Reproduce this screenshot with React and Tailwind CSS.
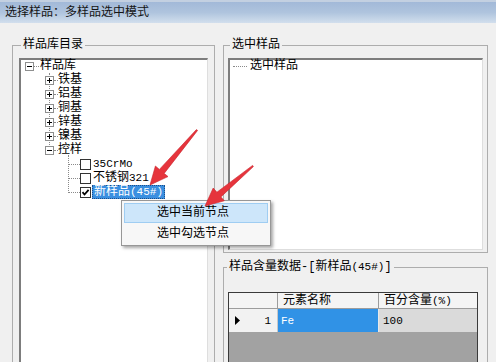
import React from "react";

const font = "font-['Liberation_Mono','Noto_Sans_CJK_SC',monospace]";

const groups = ["铁基", "铝基", "铜基", "锌基", "镍基"];

export default function App() {
  return (
    <div
      className={`relative flex h-[362px] w-[496px] flex-col overflow-hidden bg-[#f0f0f0] text-[12px] leading-[14px] text-black ${font}`}
    >
      {/* TITLE BAR */}
      <div className="flex h-[23px] shrink-0 items-center border-t-2 border-[#c3d0e1] bg-linear-to-b from-[#a2b9d8] via-[#afc4de] to-[#d2dfed] pl-[5px] text-[12px] text-[#141414]">
        选择样品：多样品选中模式
      </div>

      {/* BODY */}
      <div className="flex pl-[12px] pt-[15px]">
        {/* LEFT GROUP */}
        <fieldset className="h-[340px] w-[203px] shrink-0 border border-[#adadad]">
          <legend className="ml-[8px] px-[2px] leading-[14px]">样品库目录</legend>

          <div className="mx-[6px] mt-[6px] h-[320px] border-l-2 border-t-2 border-b border-r border-l-[#7d7d7d] border-t-[#7d7d7d] border-b-[#dedede] border-r-[#dedede] bg-white">
            <div className="relative -mt-px">
              <span className="absolute left-[28px] top-[14px] h-[74px] border-l border-dotted border-[#8a8a8a]" />
              <span className="absolute left-[47px] top-[96px] h-[36px] border-l border-dotted border-[#8a8a8a]" />

              <TreeRow indent="pl-[4px]">
                <ToggleBox open />
                <Dots w="w-[5px]" />
                <span className="ml-px">样品库</span>
              </TreeRow>

              {groups.map((name) => (
                <TreeRow key={name} indent="pl-[24px]">
                  <ToggleBox />
                  <Dots w="w-[4px]" />
                  <span>{name}</span>
                </TreeRow>
              ))}

              <TreeRow indent="pl-[24px]">
                <ToggleBox open />
                <Dots w="w-[4px]" />
                <span>控样</span>
              </TreeRow>

              <TreeRow indent="pl-[47px]">
                <Dots w="w-[12px]" />
                <CheckBox />
                <span className="ml-[2px] text-[11px]">35CrMo</span>
              </TreeRow>

              <TreeRow indent="pl-[47px]">
                <Dots w="w-[12px]" />
                <CheckBox />
                <span className="ml-[2px]">
                  不锈钢<span className="text-[11px]">321</span>
                </span>
              </TreeRow>

              <TreeRow indent="pl-[47px]">
                <Dots w="w-[12px]" />
                <CheckBox checked />
                <span className="ml-px border border-dotted border-[#1d4f8a] bg-[#3a8fe0] px-px leading-[12px] text-white">
                  新样品<span className="text-[11px]">(45#)</span>
                </span>
              </TreeRow>
            </div>
          </div>
        </fieldset>

        {/* RIGHT COLUMN */}
        <div className="ml-[8px] flex w-[265px] shrink-0 flex-col">
          <fieldset className="h-[215px] border border-[#adadad] pb-[2px]">
            <legend className="ml-[6px] px-[2px] leading-[14px]">选中样品</legend>
            <div className="mx-[4px] mt-[6px] h-[192px] border-l-2 border-t-2 border-b border-r border-l-[#7d7d7d] border-t-[#7d7d7d] border-b-[#dedede] border-r-[#dedede] bg-white">
              <div className="-mt-px flex h-[14px] items-center pl-[3px]">
                <Dots w="w-[14px]" />
                <span className="ml-[3px]">选中样品</span>
              </div>
            </div>
          </fieldset>

          <fieldset className="mt-[7px] h-[120px] border border-[#adadad]">
            <legend className="ml-[3px] px-[2px] leading-[14px]">
              样品含量数据-[新样品<span className="text-[11px]">(45#)</span>]
            </legend>

            <div className="ml-[4px] mt-[18px] flex h-[90px] w-[250px] flex-col border border-[#3a3a3a] bg-[#a2a2a2]">
              <div className="flex h-[16px] shrink-0 border-b border-[#9c9c9c] bg-[#f4f4f4]">
                <div className="w-[49px] border-r border-[#9c9c9c]" />
                <div className="w-[101px] border-r border-[#9c9c9c] pl-[5px] leading-[16px]">元素名称</div>
                <div className="flex-1 pl-[5px] leading-[16px]">
                  百分含量<span className="text-[11px]">(%)</span>
                </div>
              </div>
              <div className="flex h-[23px] shrink-0">
                <div className="flex w-[49px] items-center justify-between border-r border-[#c8c8c8] bg-[#f2f2f2] pl-[6px] pr-[6px]">
                  <svg width="5" height="9" viewBox="0 0 5 9">
                    <path d="M0 0L5 4.5L0 9Z" fill="#000" />
                  </svg>
                  <span className="text-[11px]">1</span>
                </div>
                <div className="flex w-[101px] items-center border-r border-[#e8e8e8] bg-[#3092e6] pl-[3px] text-[11px] text-white">
                  Fe
                </div>
                <div className="flex flex-1 items-center bg-[#dadada] pl-[4px] text-[11px]">100</div>
              </div>
            </div>
          </fieldset>
        </div>
      </div>

      {/* CONTEXT MENU */}
      <div className="absolute left-[121px] top-[200px] w-[150px] border border-[#979797] bg-[#f7f7f7] p-[2px] pb-0 shadow-[2px_2px_3px_rgba(0,0,0,0.35)]">
        <div className="flex h-[20px] items-center border border-[#9fcdf2] bg-[#cde6fa] pl-[32px]">
          选中当前节点
        </div>
        <div className="flex h-[22px] items-center pl-[33px]">选中勾选节点</div>
      </div>

      {/* RED ARROWS */}
      <svg
        className="pointer-events-none absolute left-0 top-0"
        width="496"
        height="362"
        viewBox="0 0 496 362"
      >
        <polygon
          points="196.4,129.6 159.4,169.4 155.4,166 150,185 168,176.6 164.2,173.4 197.6,130.4"
          fill="#e6343c"
          stroke="#c9242c"
          strokeWidth="0.6"
        />
        <polygon
          points="252.6,165.4 216.9,192.2 213.2,188 205,206 224.3,200.8 220.9,196.9 253.4,166.6"
          fill="#e6343c"
          stroke="#c9242c"
          strokeWidth="0.6"
        />
      </svg>
    </div>
  );
}

function TreeRow({ indent, children }) {
  return <div className={`relative flex h-[14px] items-center ${indent}`}>{children}</div>;
}

function Dots({ w }) {
  return <span className={`h-0 shrink-0 border-t border-dotted border-[#8a8a8a] ${w}`} />;
}

function ToggleBox({ open }) {
  return (
    <svg width="9" height="9" viewBox="0 0 9 9" className="shrink-0">
      <rect x="0.5" y="0.5" width="8" height="8" fill="#fff" stroke="#8e8f8f" />
      <path d="M2 4.5h5" stroke="#000" />
      {!open && <path d="M4.5 2v5" stroke="#000" />}
    </svg>
  );
}

function CheckBox({ checked }) {
  return (
    <svg width="11" height="11" viewBox="0 0 11 11" className="shrink-0">
      <rect x="0.5" y="0.5" width="10" height="10" fill="#fff" stroke="#333" />
      {checked && (
        <path d="M2.5 5.2L4.5 7.5L8.6 2.8" fill="none" stroke="#000" strokeWidth="1.8" />
      )}
    </svg>
  );
}
